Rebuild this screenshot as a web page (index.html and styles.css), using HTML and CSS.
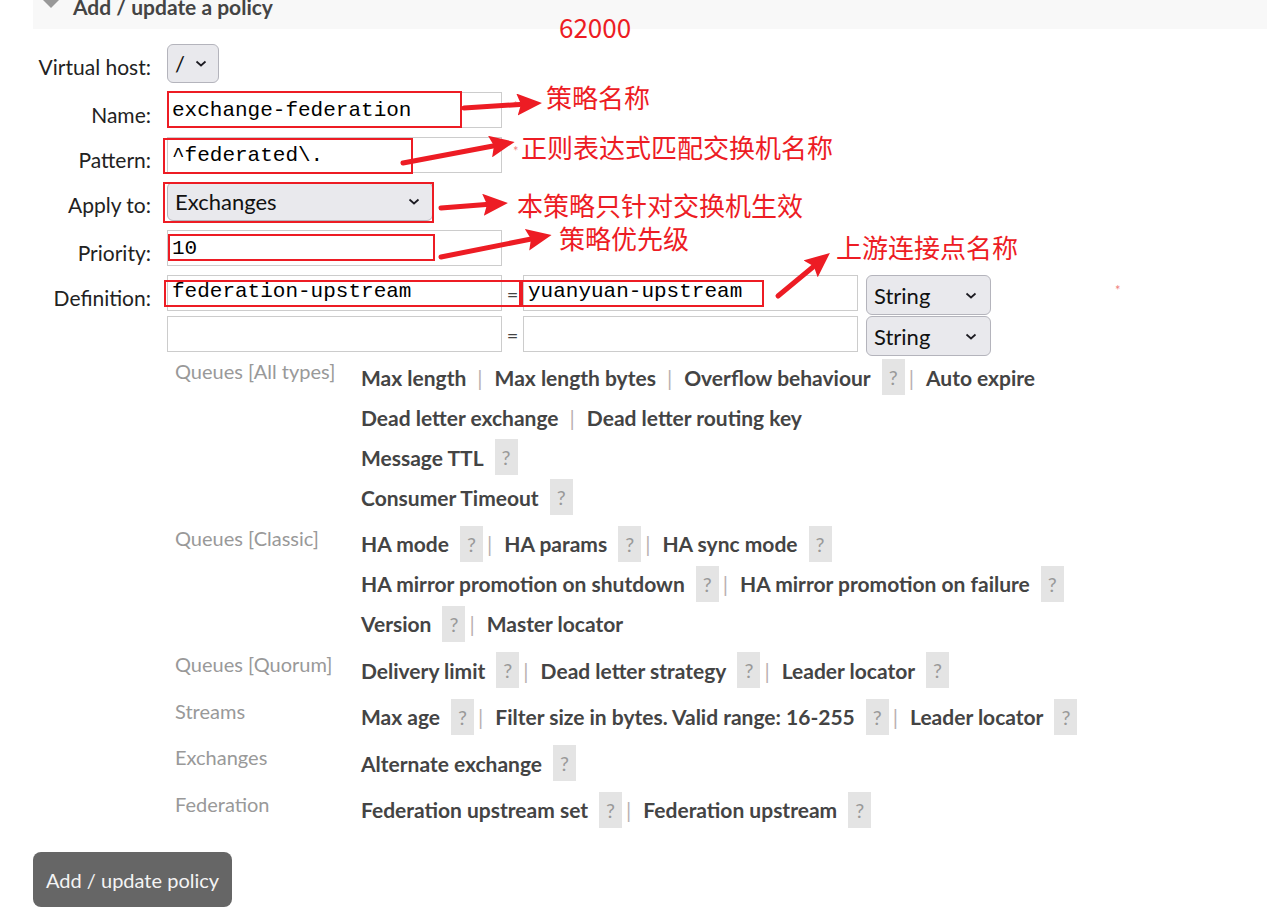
FILE: index.html
```html
<!DOCTYPE html>
<html lang="en">
<head>
<meta charset="utf-8">
<title>Add / update a policy</title>
<link rel="stylesheet" href="styles.css">
</head>
<body>
<div class="section-head">
  <span class="tri"></span>
  <h2>Add / update a policy</h2>
</div>

<div class="form">
  <label class="lbl">Virtual host:</label>
  <div class="ctl">
    <div class="select sel-vhost"><span>/</span><svg class="chev" width="12" height="7" viewBox="0 0 12 7"><path d="M1.5 1.5L6 5.5L10.5 1.5"/></svg></div>
  </div>

  <label class="lbl">Name:</label>
  <div class="ctl"><input class="txt" type="text" value="exchange-federation"><span class="mand">*</span></div>

  <label class="lbl">Pattern:</label>
  <div class="ctl"><input class="txt" type="text" value="^federated\."><span class="mand">*</span></div>

  <label class="lbl">Apply to:</label>
  <div class="ctl">
    <div class="select sel-apply"><span>Exchanges</span><svg class="chev" width="12" height="7" viewBox="0 0 12 7"><path d="M1.5 1.5L6 5.5L10.5 1.5"/></svg></div>
  </div>

  <label class="lbl">Priority:</label>
  <div class="ctl"><input class="txt" type="text" value="10"></div>

  <label class="lbl">Definition:</label>
  <div class="ctl">
    <div class="multi">
      <div class="mrow">
        <input class="txt" type="text" value="federation-upstream"><span class="eq">=</span><input class="txt" type="text" value="yuanyuan-upstream">
        <div class="select sel-type"><span>String</span><svg class="chev" width="12" height="7" viewBox="0 0 12 7"><path d="M1.5 1.5L6 5.5L10.5 1.5"/></svg></div>
      </div>
      <div class="mrow">
        <input class="txt" type="text" value=""><span class="eq">=</span><input class="txt" type="text" value="">
        <div class="select sel-type"><span>String</span><svg class="chev" width="12" height="7" viewBox="0 0 12 7"><path d="M1.5 1.5L6 5.5L10.5 1.5"/></svg></div>
      </div>

      <div class="helps">
        <div class="grp-label">Queues [All types]</div>
        <div class="grp-items">
          <div class="line"><span>Max length</span><span class="sep">|</span><span>Max length bytes</span><span class="sep">|</span><span>Overflow behaviour</span><span class="help">?</span><span class="sep">|</span><span>Auto expire</span></div>
          <div class="line"><span>Dead letter exchange</span><span class="sep">|</span><span>Dead letter routing key</span></div>
          <div class="line"><span>Message TTL</span><span class="help">?</span></div>
          <div class="line"><span>Consumer Timeout</span><span class="help">?</span></div>
        </div>

        <div class="grp-label">Queues [Classic]</div>
        <div class="grp-items">
          <div class="line"><span>HA mode</span><span class="help">?</span><span class="sep">|</span><span>HA params</span><span class="help">?</span><span class="sep">|</span><span>HA sync mode</span><span class="help">?</span></div>
          <div class="line"><span>HA mirror promotion on shutdown</span><span class="help">?</span><span class="sep">|</span><span>HA mirror promotion on failure</span><span class="help">?</span></div>
          <div class="line"><span>Version</span><span class="help">?</span><span class="sep">|</span><span>Master locator</span></div>
        </div>

        <div class="grp-label">Queues [Quorum]</div>
        <div class="grp-items">
          <div class="line"><span>Delivery limit</span><span class="help">?</span><span class="sep">|</span><span>Dead letter strategy</span><span class="help">?</span><span class="sep">|</span><span>Leader locator</span><span class="help">?</span></div>
        </div>

        <div class="grp-label">Streams</div>
        <div class="grp-items">
          <div class="line"><span>Max age</span><span class="help">?</span><span class="sep">|</span><span>Filter size in bytes. Valid range: 16-255</span><span class="help">?</span><span class="sep">|</span><span>Leader locator</span><span class="help">?</span></div>
        </div>

        <div class="grp-label">Exchanges</div>
        <div class="grp-items">
          <div class="line"><span>Alternate exchange</span><span class="help">?</span></div>
        </div>

        <div class="grp-label">Federation</div>
        <div class="grp-items">
          <div class="line"><span>Federation upstream set</span><span class="help">?</span><span class="sep">|</span><span>Federation upstream</span><span class="help">?</span></div>
        </div>
      </div>
    </div>
    <span class="mand mand-def">*</span>
  </div>
</div>

<button class="btn" type="button">Add / update policy</button>

<div class="annotations">
  <div class="mark mark-name"></div>
  <div class="mark mark-pattern"></div>
  <div class="mark mark-apply"></div>
  <div class="mark mark-priority"></div>
  <div class="mark mark-key"></div>
  <div class="mark mark-value"></div>

  <div class="note note-port">62000</div>
  <div class="note note-name">策略名称</div>
  <div class="note note-pattern">正则表达式匹配交换机名称</div>
  <div class="note note-apply">本策略只针对交换机生效</div>
  <div class="note note-priority">策略优先级</div>
  <div class="note note-upstream">上游连接点名称</div>

  <svg class="arrows" width="1267" height="909" viewBox="0 0 1267 909">
    <defs>
      <marker id="ah" markerUnits="userSpaceOnUse" markerWidth="26" markerHeight="22" refX="3" refY="11" orient="auto">
        <path d="M0 0L25 11L0 22L4 11Z" fill="#ed1c24"/>
      </marker>
    </defs>
    <g stroke="#ed1c24" stroke-width="5" stroke-linecap="round" fill="none">
      <line x1="464" y1="108" x2="520" y2="104.4" marker-end="url(#ah)"/>
      <line x1="403" y1="163" x2="493" y2="146" marker-end="url(#ah)"/>
      <line x1="441" y1="208" x2="486" y2="204.6" marker-end="url(#ah)"/>
      <line x1="441" y1="257" x2="530" y2="239.2" marker-end="url(#ah)"/>
      <line x1="778" y1="296" x2="813" y2="267" marker-end="url(#ah)"/>
    </g>
  </svg>
</div>
</body>
</html>
```

FILE: styles.css
```css
* { box-sizing: border-box; }

html, body {
  margin: 0;
  padding: 0;
  background: #fff;
}

body {
  width: 1267px;
  height: 909px;
  overflow: hidden;
  position: relative;
  font-family: Lato, "Noto Sans", sans-serif;
  color: #222;
}

/* ---------- section header ---------- */
.section-head {
  margin-left: 33px;
  height: 29px;
  background: #f8f8f8;
  display: flex;
  align-items: flex-start;
}

.section-head .tri {
  width: 0;
  height: 0;
  border-left: 8.5px solid transparent;
  border-right: 8.5px solid transparent;
  border-top: 8px solid #999;
  margin: 0 14px 0 10px;
}

.section-head h2 {
  margin: -3px 0 0;
  font-size: 21px;
  line-height: 20px;
  font-weight: 700;
  color: #444;
}

/* ---------- form ---------- */
.form {
  display: grid;
  grid-template-columns: 118px 1fr;
  column-gap: 16px;
  row-gap: 9px;
  margin: 15px 0 0 33px;
}

.lbl {
  text-align: right;
  white-space: nowrap;
  font-size: 21px;
  line-height: 26px;
  padding-top: 10px;
  color: #222;
}

.ctl {
  display: flex;
  align-items: flex-start;
}

.txt {
  width: 335px;
  height: 36px;
  margin: 0;
  border: 1px solid #ccc;
  border-radius: 0;
  padding: 0 4px;
  font: 21px "Liberation Mono", monospace;
  color: #000;
  background: #fff;
  outline: none;
}

.mand {
  color: #f08080;
  font-size: 13px;
  line-height: 13px;
  margin: 8px 0 0 11px;
}

.mand-def {
  margin: 9px 0 0 8px;
}

.select {
  display: flex;
  align-items: center;
  justify-content: space-between;
  height: 39px;
  border: 1px solid #b4b4bc;
  border-radius: 6px;
  background: #e9e9ed;
  padding: 0 11px 0 7px;
  font-size: 22px;
  color: #111;
}

.chev path {
  fill: none;
  stroke: #1c1b22;
  stroke-width: 1.7;
}

.sel-vhost { width: 52px; }
.sel-apply { width: 266px; padding-right: 12px; }
.sel-type  { width: 125px; height: 40px; margin-left: 8px; padding-right: 13px; }

/* ---------- definition multifield ---------- */
.multi {
  width: 940px;
}

.mrow {
  display: flex;
  align-items: flex-start;
  height: 41px;
}

.mrow .txt {
  padding-bottom: 3px;
}

.eq {
  width: 21px;
  text-align: center;
  font-size: 20px;
  line-height: 38px;
  color: #444;
}

/* ---------- argument help list ---------- */
.helps {
  display: grid;
  grid-template-columns: 194px 1fr;
}

.grp-label {
  padding: 0 0 0 8px;
  font-size: 20px;
  line-height: 29px;
  color: #999;
  white-space: nowrap;
}

.grp-items {
  padding: 0 0 6.5px;
}

.line {
  display: flex;
  align-items: center;
  height: 40px;
  font-size: 21px;
  font-weight: 700;
  color: #444;
  white-space: nowrap;
}

.help {
  width: 23px;
  height: 36px;
  margin-left: 11px;
  background: #e4e4e4;
  color: #999;
  font-weight: 400;
  font-size: 20px;
  display: flex;
  align-items: center;
  justify-content: center;
}

.sep {
  color: #b9b0b0;
  font-weight: 400;
  padding: 0 12px 0 11px;
}

.help + .sep {
  padding-left: 4px;
}

/* ---------- button ---------- */
.btn {
  display: block;
  margin: 16px 0 0 33px;
  height: 55px;
  padding: 0 13px;
  border: none;
  border-radius: 8px;
  background: #666;
  color: #f4f4f4;
  font-family: Lato, "Noto Sans", sans-serif;
  font-size: 20px;
}

/* ---------- screenshot annotations (overlay) ---------- */
.annotations {
  position: absolute;
  left: 0;
  top: 0;
  width: 1267px;
  height: 909px;
  pointer-events: none;
}

.arrows {
  position: absolute;
  left: 0;
  top: 0;
}

.mark {
  position: absolute;
  border: 2px solid #ed1c24;
}

.mark-name     { left: 167px; top: 91px;  width: 295px; height: 37px; }
.mark-pattern  { left: 163px; top: 138px; width: 250px; height: 36px; }
.mark-apply    { left: 163px; top: 182px; width: 271px; height: 41px; }
.mark-priority { left: 168px; top: 234px; width: 267px; height: 27px; }
.mark-key      { left: 164px; top: 280px; width: 357px; height: 27px; }
.mark-value    { left: 521px; top: 280px; width: 243px; height: 27px; }

.note {
  position: absolute;
  font-family: "Noto Sans CJK SC", sans-serif;
  font-size: 26px;
  line-height: 26px;
  color: #ed1c24;
  white-space: nowrap;
}

.note-port     { left: 559px; top: 14px; }
.note-name     { left: 546px; top: 84px; }
.note-pattern  { left: 521px; top: 134px; }
.note-apply    { left: 517px; top: 192px; }
.note-priority { left: 559px; top: 225px; }
.note-upstream { left: 836px; top: 234px; }
```
